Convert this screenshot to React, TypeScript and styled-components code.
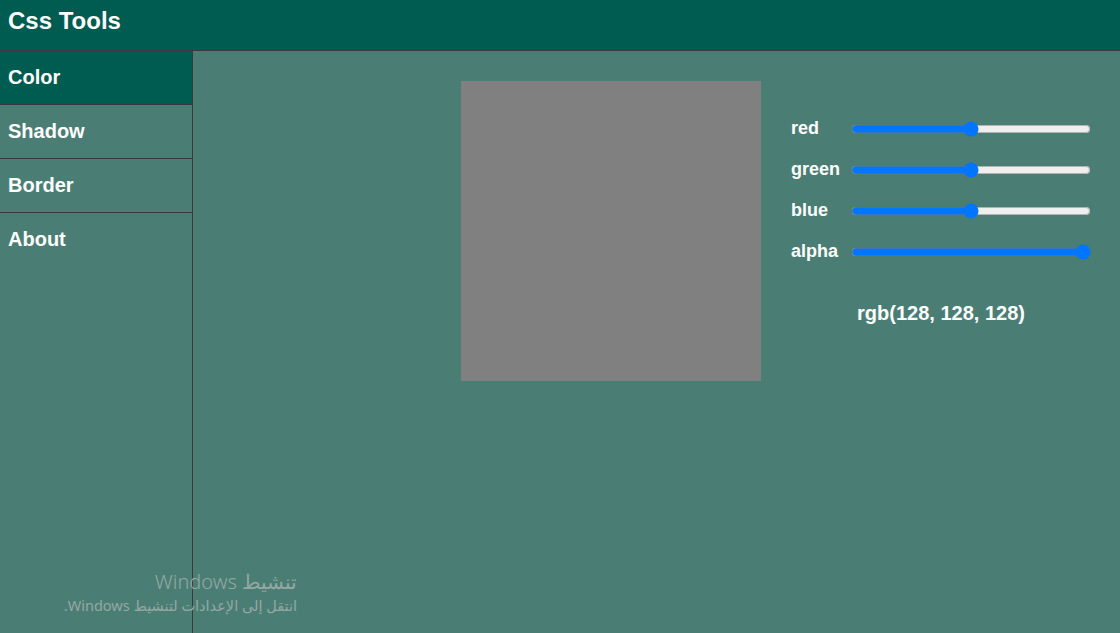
import React, { useState } from "react";
import styled, { createGlobalStyle } from "styled-components";

const Global = createGlobalStyle`
  html, body { margin: 0; padding: 0; height: 100%; }
  body { font-family: "Liberation Sans", Arial, sans-serif; background: #4a7e74; color: #fff; overflow: hidden; }
  #root { height: 100%; }
`;

const Page = styled.div`
  display: flex;
  flex-direction: column;
  height: 633px;
  position: relative;
`;

const Header = styled.header`
  height: 51px;
  box-sizing: border-box;
  background: #005c50;
  border-bottom: 1px solid #3a3a3a;
  display: flex;
  align-items: center;
  padding: 0 8px 8px;
`;

const Title = styled.h1`
  margin: 0;
  font-size: 24px;
  font-weight: bold;
`;

const Body = styled.div`
  flex: 1;
  display: flex;
`;

const Sidebar = styled.nav`
  width: 192px;
  border-right: 1px solid #3a3a3a;
  display: flex;
  flex-direction: column;
`;

const NavItem = styled.div<{ $active?: boolean }>`
  height: 54px;
  box-sizing: border-box;
  border-bottom: 1px solid #3a3a3a;
  background: ${(p) => (p.$active ? "#005c50" : "transparent")};
  display: flex;
  align-items: center;
  padding: 0 8px;
  font-size: 20px;
  font-weight: bold;
  &:last-child { border-bottom-color: transparent; }
`;

const Main = styled.main`
  flex: 1;
  display: flex;
  justify-content: flex-end;
  align-items: flex-start;
  gap: 30px;
  padding: 30px 29px 0 0;
`;

const Preview = styled.div`
  width: 300px;
  height: 300px;
`;

const Controls = styled.div`
  width: 300px;
  padding-top: 27px;
  display: flex;
  flex-direction: column;
`;

const Row = styled.label`
  height: 41px;
  display: flex;
  align-items: center;
  font-size: 18px;
  font-weight: bold;
`;

const LabelText = styled.span`
  width: 60px;
`;

const Range = styled.input`
  width: 240px;
  margin: 0;
  accent-color: #0075ff;
`;

const Output = styled.div`
  margin-top: 30px;
  text-align: center;
  font-size: 20px;
  font-weight: bold;
`;

const Watermark = styled.div`
  position: absolute;
  left: 0;
  bottom: 17px;
  width: 297px;
  text-align: right;
  color: #94a8a3;
  font-family: "Noto Sans", "DejaVu Sans", sans-serif;
  pointer-events: none;
`;

const WmTitle = styled.div`
  font-size: 20px;
  line-height: 24px;
  font-weight: 300;
`;

const WmSub = styled.div`
  font-size: 14.5px;
  line-height: 22px;
`;

export default function App() {
  const [c, setC] = useState({ red: 128, green: 128, blue: 128, alpha: 1 });
  const keys: (keyof typeof c)[] = ["red", "green", "blue", "alpha"];
  const color = `rgba(${c.red}, ${c.green}, ${c.blue}, ${c.alpha})`;
  return (
    <>
      <Global />
      <Page>
        <Header>
          <Title>Css Tools</Title>
        </Header>
        <Body>
          <Sidebar>
            <NavItem $active>Color</NavItem>
            <NavItem>Shadow</NavItem>
            <NavItem>Border</NavItem>
            <NavItem>About</NavItem>
          </Sidebar>
          <Main>
            <Preview style={{ background: color }} />
            <Controls>
              {keys.map((k) => (
                <Row key={k}>
                  <LabelText>{k}</LabelText>
                  <Range
                    type="range"
                    min={0}
                    max={k === "alpha" ? 1 : 255}
                    step={k === "alpha" ? 0.01 : 1}
                    value={c[k]}
                    onChange={(e) => setC({ ...c, [k]: Number(e.target.value) })}
                  />
                </Row>
              ))}
              <Output>
                {c.alpha === 1
                  ? `rgb(${c.red}, ${c.green}, ${c.blue})`
                  : `rgba(${c.red}, ${c.green}, ${c.blue}, ${c.alpha})`}
              </Output>
            </Controls>
          </Main>
        </Body>
        <Watermark>
          <WmTitle dir="rtl">تنشيط Windows</WmTitle>
          <WmSub dir="rtl">انتقل إلى الإعدادات لتنشيط Windows.</WmSub>
        </Watermark>
      </Page>
    </>
  );
}
